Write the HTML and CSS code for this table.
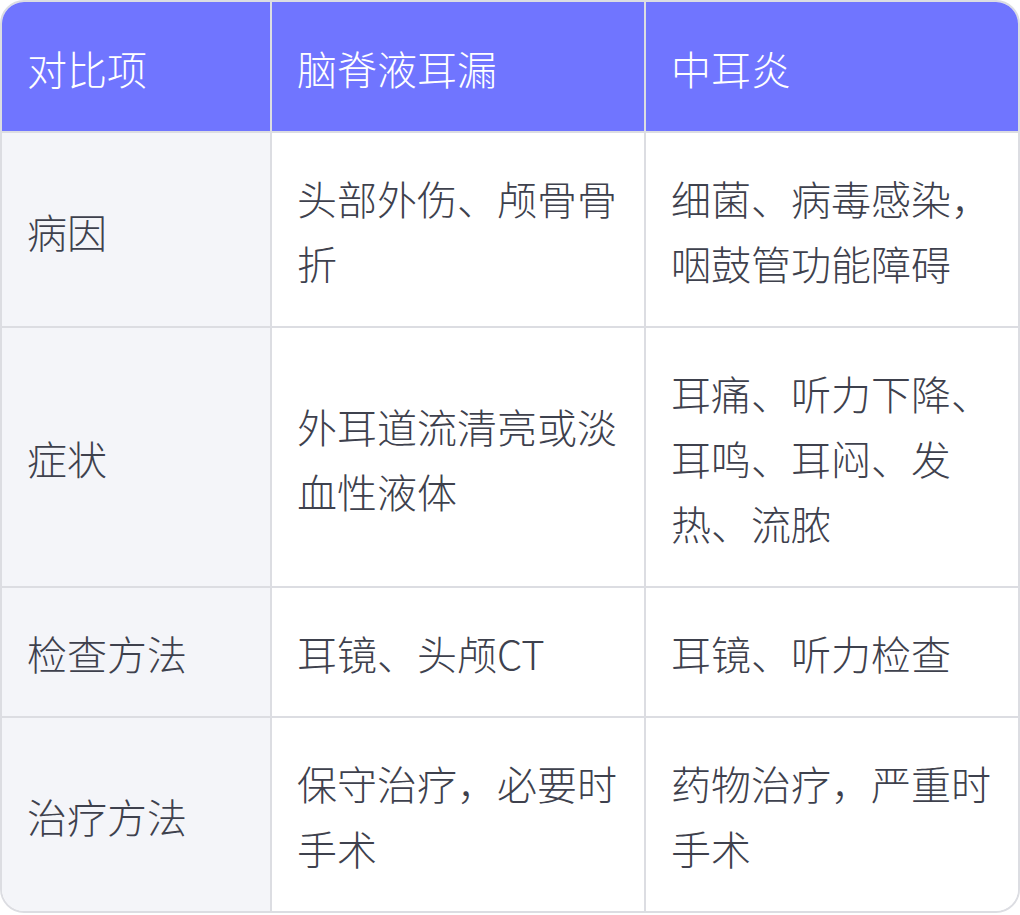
FILE: index.html
```html
<!DOCTYPE html>
<html lang="zh-CN">
<head>
<meta charset="utf-8">
<title>脑脊液耳漏与中耳炎对比</title>
<link rel="stylesheet" href="styles.css">
</head>
<body>
<div class="table">
  <div class="cell head">对比项</div>
  <div class="cell head">脑脊液耳漏</div>
  <div class="cell head last-col">中耳炎</div>

  <div class="cell label">病因</div>
  <div class="cell">头部外伤、颅骨骨折</div>
  <div class="cell last-col">细菌、病毒感染，咽鼓管功能障碍</div>

  <div class="cell label">症状</div>
  <div class="cell">外耳道流清亮或淡血性液体</div>
  <div class="cell last-col">耳痛、听力下降、耳鸣、耳闷、发热、流脓</div>

  <div class="cell label">检查方法</div>
  <div class="cell">耳镜、头颅CT</div>
  <div class="cell last-col">耳镜、听力检查</div>

  <div class="cell label last-row">治疗方法</div>
  <div class="cell last-row">保守治疗，必要时手术</div>
  <div class="cell last-col last-row">药物治疗，严重时手术</div>
</div>
</body>
</html>
```

FILE: styles.css
```css
html, body {
  margin: 0;
  padding: 0;
  background: #ffffff;
}

.table {
  box-sizing: border-box;
  width: 1020px;
  display: grid;
  grid-template-columns: 270px 374px 372px;
  border: 2px solid #dcdde2;
  border-radius: 24px;
  overflow: hidden;
  font-family: "Noto Sans CJK SC", "Noto Sans", sans-serif;
  font-size: 40px;
  font-weight: 300;
  line-height: 65px;
  color: #3e414d;
}

.cell {
  box-sizing: border-box;
  display: flex;
  align-items: center;
  padding: 33px 24px 30px 25px;
  border-right: 2px solid #dcdde2;
  border-bottom: 2px solid #dcdde2;
  background: #ffffff;
}

.cell.head {
  background: #7075ff;
  color: #ffffff;
  padding-top: 34px;
}

.cell.label {
  background: #f4f5f9;
}

.cell.last-col {
  border-right: none;
}

.cell.last-row {
  border-bottom: none;
}
```
